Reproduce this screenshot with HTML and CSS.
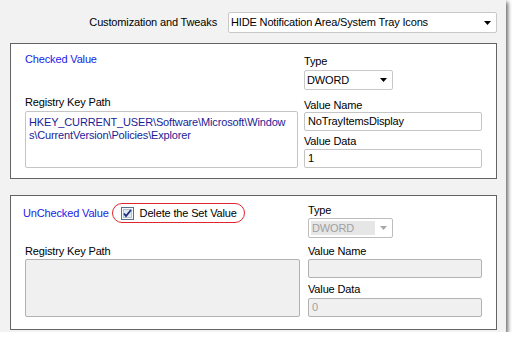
FILE: index.html
```html
<!DOCTYPE html>
<html lang="en">
<head>
    <meta charset="UTF-8">
    <title>Customization and Tweaks</title>
    <link rel="stylesheet" href="styles.css">
</head>
<body>
    <div class="window">
        <div class="topbar">
            <span class="label">Customization and Tweaks</span>
            <div class="combo combo-wide">
                <span class="combo-text">HIDE Notification Area/System Tray Icons</span>
                <svg class="arrow" width="7" height="4" viewBox="0 0 7 4"><path d="M0 0H7L3.5 4Z"/></svg>
            </div>
        </div>

        <div class="panel panel-checked">
            <div class="col col-left">
                <div class="heading">Checked Value</div>
                <div class="label key-label">Registry Key Path</div>
                <div class="box keypath">HKEY_CURRENT_USER\Software\Microsoft\Window<br>s\CurrentVersion\Policies\Explorer</div>
            </div>
            <div class="col col-right">
                <div class="label">Type</div>
                <div class="combo combo-type">
                    <span class="combo-text">DWORD</span>
                    <svg class="arrow" width="7" height="4" viewBox="0 0 7 4"><path d="M0 0H7L3.5 4Z"/></svg>
                </div>
                <div class="label name-label">Value Name</div>
                <div class="box field">NoTrayItemsDisplay</div>
                <div class="label data-label">Value Data</div>
                <div class="box field">1</div>
            </div>
        </div>

        <div class="panel panel-unchecked">
            <div class="col col-left">
                <div class="heading-row">
                    <span class="heading">UnChecked Value</span>
                    <label class="marked">
                        <svg class="checkbox" width="13" height="13" viewBox="0 0 13 13">
                            <rect x="0.5" y="0.5" width="12" height="12" fill="#f4f6f9" stroke="#5a6f8c"/>
                            <rect x="2.5" y="2.5" width="8" height="8" fill="#dfe6ee" stroke="#b5c2d2"/>
                            <path d="M3 6.5L5 9L10 3" fill="none" stroke="#1d2e7a" stroke-width="1.8"/>
                        </svg>
                        <span>Delete the Set Value</span>
                    </label>
                </div>
                <div class="label key-label">Registry Key Path</div>
                <div class="box keypath disabled"></div>
            </div>
            <div class="col col-right">
                <div class="label">Type</div>
                <div class="combo combo-type disabled">
                    <span class="combo-text">DWORD</span>
                    <svg class="arrow" width="7" height="4" viewBox="0 0 7 4"><path d="M0 0H7L3.5 4Z"/></svg>
                </div>
                <div class="label name-label">Value Name</div>
                <div class="box field disabled"></div>
                <div class="label data-label">Value Data</div>
                <div class="box field disabled">0</div>
            </div>
        </div>
    </div>
</body>
</html>
```

FILE: styles.css
```css
body {
    margin: 0;
    background: #ffffff;
    font-family: "Liberation Sans", Arial, sans-serif;
    font-size: 11px;
    letter-spacing: -0.15px;
    color: #000;
}
.window {
    width: 506px;
    height: 332px;
    background: #f2f2f2;
    box-shadow: 2px 2px 4px rgba(0, 0, 0, 0.6);
    overflow: hidden;
}
.label, .heading {
    line-height: 13px;
    white-space: nowrap;
}
.heading {
    color: #1a1ae6;
}
.topbar {
    display: flex;
    justify-content: flex-end;
    align-items: center;
    gap: 11px;
    padding: 12px 9px 0 0;
    margin-bottom: 10px;
}
.combo {
    box-sizing: border-box;
    height: 20px;
    background: #fff;
    border: 1px solid #c9c9c9;
    border-radius: 2px;
    display: flex;
    align-items: center;
    justify-content: space-between;
    padding: 0 5px 0 2px;
}
.combo-wide {
    width: 269px;
    height: 21px;
}
.combo-text {
    line-height: 13px;
}
.arrow {
    fill: #000;
}
.panel {
    box-sizing: border-box;
    margin-left: 10px;
    width: 487px;
    border: 1px solid #646464;
    background: #fff;
    display: flex;
}
.panel-checked {
    height: 136px;
    margin-bottom: 16px;
    padding-left: 14px;
}
.panel-unchecked {
    height: 135px;
    padding-left: 14px;
}
.col {
    display: flex;
    flex-direction: column;
}
.box {
    box-sizing: border-box;
    background: #fff;
    border: 1px solid #c5c5c5;
    border-radius: 2px;
    padding: 1px 3px;
    line-height: 13px;
}
.box.disabled {
    background: #f0f0f0;
    border-color: #b2b2b2;
    color: #a0a0a0;
}
.field {
    height: 19px;
    padding-top: 2px;
}

/* checked panel */
.panel-checked .col-left {
    width: 273px;
    padding-top: 9px;
}
.panel-checked .key-label {
    margin-top: 30px;
}
.panel-checked .keypath {
    margin-top: 2px;
    height: 57px;
    color: #1c1c96;
    padding-top: 4px;
}
.panel-checked .col-right {
    width: 178px;
    margin-left: 6px;
    padding-top: 11px;
}
.panel-checked .combo-type {
    width: 89px;
    margin-top: 2px;
}
.panel-checked .name-label {
    margin-top: 9px;
}
.panel-checked .data-label {
    margin-top: 4px;
}
.panel-checked .data-label + .field {
    margin-top: 1px;
}

/* unchecked panel */
.heading-row {
    display: flex;
    align-items: center;
    gap: 3px;
    margin-left: -2px;
}
.marked {
    box-sizing: border-box;
    height: 20px;
    display: flex;
    align-items: center;
    gap: 6px;
    padding: 0 7px 0 8px;
    border: 1px solid #e0262e;
    border-radius: 10px;
    white-space: nowrap;
    line-height: 13px;
}
.checkbox {
    display: block;
}
.panel-unchecked .col-left {
    width: 275px;
    padding-top: 7px;
}
.panel-unchecked .key-label {
    margin-top: 22px;
}
.panel-unchecked .keypath {
    margin-top: 1px;
    height: 58px;
}
.panel-unchecked .col-right {
    width: 174px;
    margin-left: 8px;
    padding-top: 8px;
}
.panel-unchecked .combo-type {
    width: 85px;
    margin-top: 1px;
    border-color: #bdbdbd;
    padding: 2px 5px 2px 2px;
    align-items: stretch;
}
.combo.disabled .combo-text {
    background: #e6e6e6;
    color: #a0a0a0;
    width: 63px;
    padding-left: 1px;
    display: flex;
    align-items: center;
}
.combo.disabled .arrow {
    fill: #a8a8a8;
    align-self: center;
}
.panel-unchecked .name-label {
    margin-top: 7px;
}
.panel-unchecked .name-label + .field {
    margin-top: 1px;
}
.panel-unchecked .data-label {
    margin-top: 5px;
}
.panel-unchecked .data-label + .field {
    margin-top: 2px;
}
```
